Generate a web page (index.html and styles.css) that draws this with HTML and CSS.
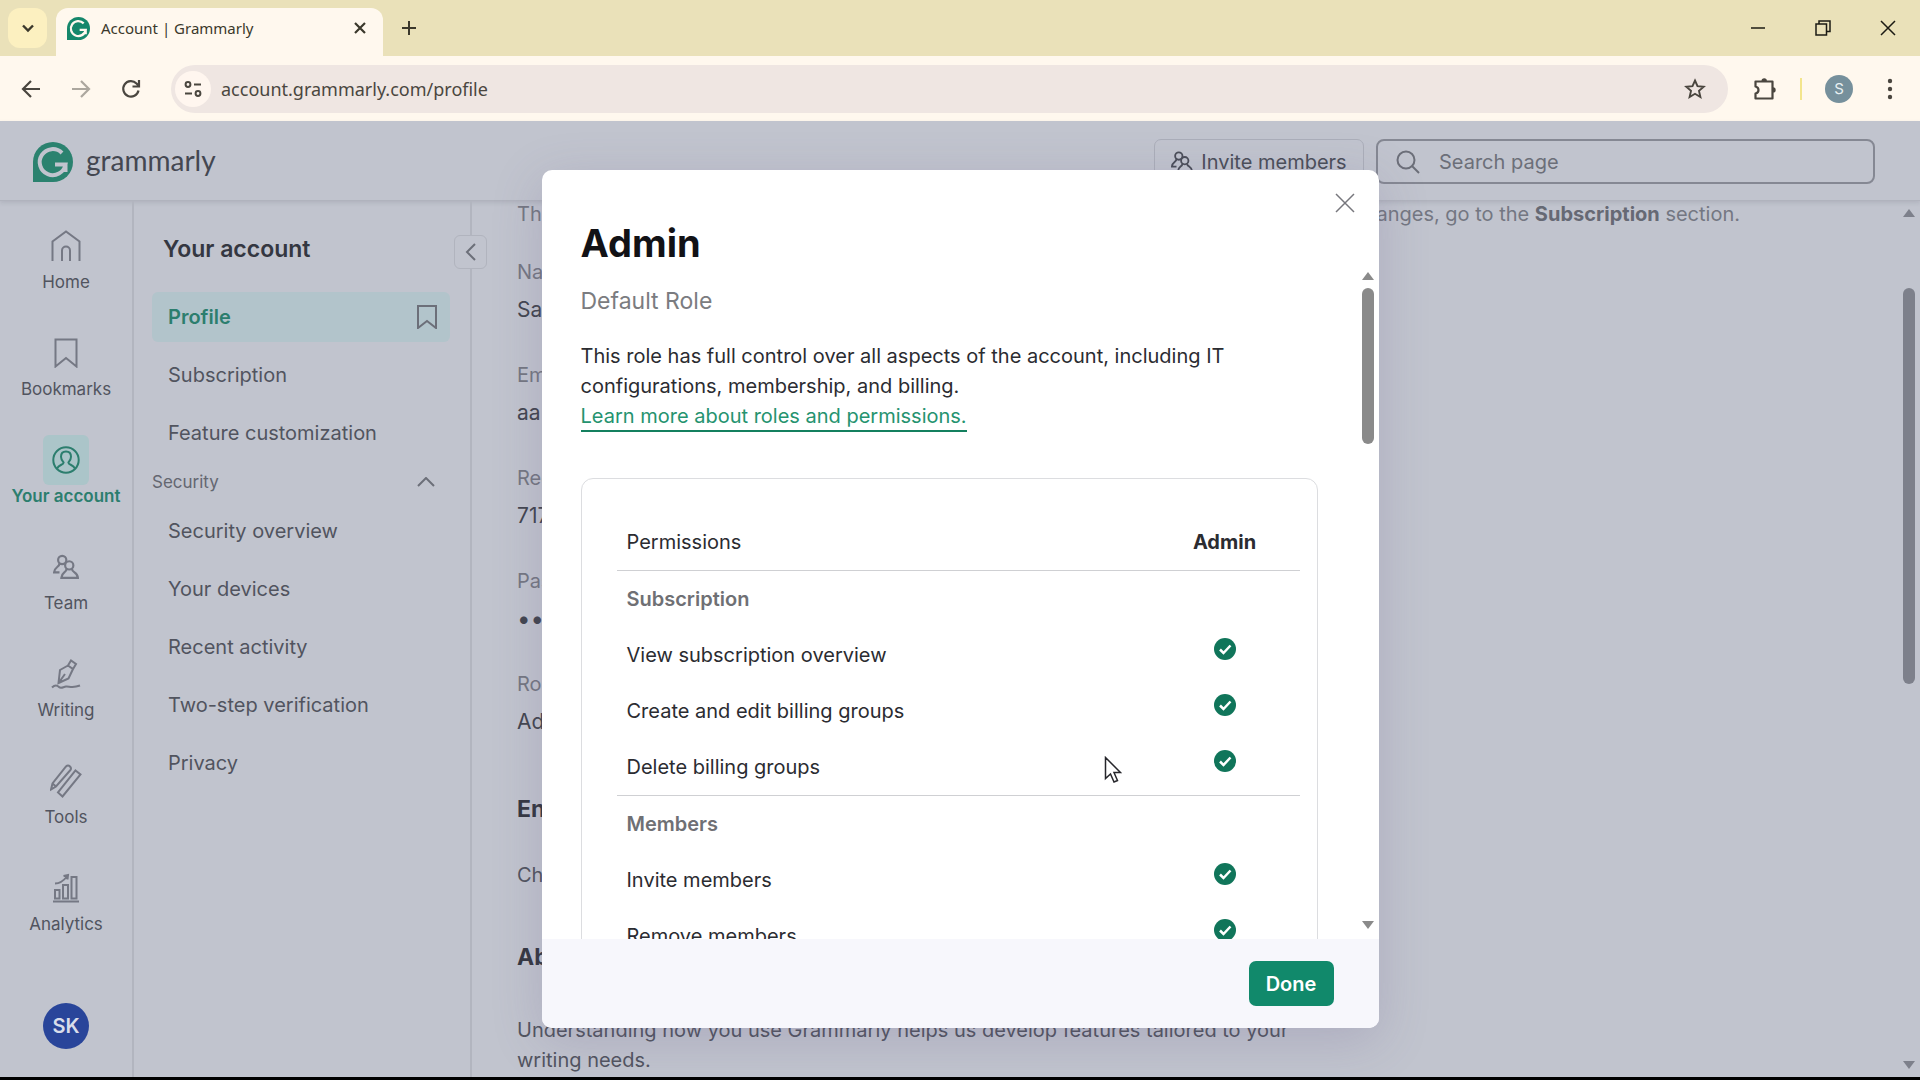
FILE: index.html
```html
<!DOCTYPE html>
<html lang="en">
<head>
  <meta charset="UTF-8" />
  <meta name="viewport" content="width=device-width, initial-scale=1" />
  <title>Account | Grammarly</title>
  <link rel="stylesheet" href="styles.css">
</head>
<body>
  <div class="tabbar">
    <button class="tab-search" aria-label="Search tabs">
      <svg width="14" height="14" viewBox="0 0 14 14"><path d="M2 4.5l5 5 5-5" stroke-width="2.4"/></svg>
    </button>
    <div class="tab">
      <svg class="logo" width="23" height="23" viewBox="0 0 40 40"><path class="leaf" d="M20 0a20 20 0 1 1 0 40H0V20A20 20 0 0 1 20 0z"/><path class="g" d="M29 11a13 13 0 1 0 3.500 11.500H22M32.500 22v8"/></svg>
      <span class="tab-title">Account | Grammarly</span>
      <button class="tab-close" aria-label="Close tab">
        <svg width="12" height="12" viewBox="0 0 12 12"><path d="M1 1l10 10M11 1L1 11" stroke-width="2.2"/></svg>
      </button>
    </div>
    <button class="new-tab" aria-label="New tab">
      <svg width="16" height="16" viewBox="0 0 16 16"><path d="M8 1v14M1 8h14" stroke-width="2"/></svg>
    </button>
    <div class="window-buttons">
      <button aria-label="Minimize"><svg width="16" height="16" viewBox="0 0 16 16"><path d="M1 8h14" stroke-width="1.500"/></svg></button>
      <button aria-label="Restore"><svg width="16" height="16" viewBox="0 0 16 16"><path d="M1 4h10.500v11H1zM4 4V1h11v10.500h-3.500" stroke-width="1.500"/></svg></button>
      <button aria-label="Close"><svg width="16" height="16" viewBox="0 0 16 16"><path d="M1 1l14 14M15 1L1 15" stroke-width="1.500"/></svg></button>
    </div>
  </div>

  <div class="toolbar">
    <button aria-label="Back"><svg width="20" height="20" viewBox="0 0 20 20"><path d="M19 10H2.500M10 2l-8 8 8 8" stroke-width="2.200"/></svg></button>
    <button class="disabled" aria-label="Forward" disabled><svg width="20" height="20" viewBox="0 0 20 20"><path d="M1 10h16.500M10 2l8 8-8 8" stroke-width="2.200"/></svg></button>
    <button aria-label="Reload"><svg width="20" height="20" viewBox="0 0 20 20"><path d="M17.500 11.500A7.700 7.700 0 1 1 15.500 4.500L18 7M18 1v6.500h-6.500" stroke-width="2.200"/></svg></button>
    <div class="address">
      <button class="site-info" aria-label="Site information">
        <svg width="18" height="18" viewBox="0 0 18 18"><circle cx="4" cy="4.500" r="2.400"/><path d="M10 4.500h7M1 13.500h7"/><circle cx="14" cy="13.500" r="2.400"/></svg>
      </button>
      <input type="text" value="account.grammarly.com/profile" aria-label="Address">
      <button aria-label="Bookmark this tab"><svg width="22" height="22" viewBox="0 0 22 22"><path d="M11 2.500l2.500 5.700 6.200.6-4.700 4.100 1.400 6.100-5.400-3.200L5.600 19 7 12.900 2.300 8.800l6.200-.6z" stroke-width="1.900"/></svg></button>
    </div>
    <button class="extensions" aria-label="Extensions"><svg width="24" height="24" viewBox="0 0 24 24"><path d="M2.500 4.500h17v17h-17v-5c4-1 4-6 0-7z" stroke-width="2.200" stroke-linejoin="round"/><path class="solid" d="M8.500 4a2.700 2.700 0 0 1 5.400 0zM20 10.200a2.700 2.700 0 0 1 0 5.400z"/></svg></button>
    <span class="divider"></span>
    <button class="profile" aria-label="Profile S">S</button>
    <button class="more" aria-label="Menu"><svg width="6" height="22" viewBox="0 0 6 22"><g class="solid"><circle cx="3" cy="3" r="2.200"/><circle cx="3" cy="11" r="2.200"/><circle cx="3" cy="19" r="2.200"/></g></svg></button>
  </div>

  <div class="page">
    <header class="header">
      <a class="brand" href="#">
        <svg class="logo" width="40" height="40" viewBox="0 0 40 40"><path class="leaf" d="M20 0a20 20 0 1 1 0 40H0V20A20 20 0 0 1 20 0z"/><path class="g" d="M29 11a13 13 0 1 0 3.500 11.500H22M32.500 22v8"/></svg>
        <span>grammarly</span>
      </a>
      <button class="invite">
        <svg width="22" height="22" viewBox="0 0 24 24"><circle cx="8.500" cy="5.500" r="4"/><path d="M6 8.500c0 4-4.500 3-5 8.500h5"/><circle cx="15" cy="10.500" r="4"/><path d="M12.500 13.500c0 4-4.500 3-4.800 8.500H23c-.4-5.500-5.500-4.500-5.500-8.500"/></svg>
        Invite members
      </button>
      <label class="search">
        <svg width="24" height="24" viewBox="0 0 24 24"><circle cx="10" cy="10" r="8.500"/><path d="M16 16l7 7"/></svg>
        <input type="text" placeholder="Search page" aria-label="Search page">
      </label>
    </header>

    <div class="columns">
      <nav class="rail">
        <a href="#"><span class="icon"><svg width="30" height="32" viewBox="0 0 30 32"><path d="M1.500 31V11.500L15 1.500l13.500 10V31M11 31V20.500a4 4 0 0 1 8 0V31"/></svg></span>Home</a>
        <a href="#"><span class="icon"><svg width="24" height="30" viewBox="0 0 24 30"><path d="M1.500 1.500h21v27L12 20 1.500 28.500z"/></svg></span>Bookmarks</a>
        <a href="#" class="active"><span class="icon"><svg width="28" height="28" viewBox="0 0 28 28"><circle cx="14" cy="14" r="12.700"/><path d="M14 5.500c3.200 0 5 2 5 5.300 0 2.800-1.400 4.500-2.600 5.600 0 2.500 4.600 2 6.600 6.100M14 5.500c-3.200 0-5 2-5 5.300 0 2.800 1.400 4.500 2.600 5.600 0 2.500-4.600 2-6.600 6.100"/></svg></span>Your account</a>
        <a href="#"><span class="icon"><svg width="26" height="26" viewBox="0 0 24 24"><circle cx="8.500" cy="5.500" r="3.800"/><path d="M6 8.500c0 4-4.500 3-5 8.500h5"/><circle cx="15" cy="10.500" r="3.800"/><path d="M12.500 13.500c0 4-4.500 3-4.800 8.500H23c-.4-5.500-5.500-4.500-5.500-8.500"/></svg></span>Team</a>
        <a href="#"><span class="icon"><svg width="30" height="30" viewBox="0 0 30 30"><path d="M17 6.500l3-5 5 3.500-3 5zM17 6.500L9 11 7.500 24l10-4.500L22 10M7.500 24l6.500-9M1 28.500c3-3 5-2.500 7-.5s4 0 7-.5 6 2 14-1"/></svg></span>Writing</a>
        <a href="#"><span class="icon"><svg width="32" height="34" viewBox="0 0 32 34"><path d="M16 2.500q2-2 4 0t0 4L6 22.500 1 25.500l1.500-6zM2.500 19.500L6 22.500M25.500 6.500l5 4L12.500 32.500l-4.500-4z"/></svg></span>Tools</a>
        <a href="#"><span class="icon"><svg width="28" height="30" viewBox="0 0 28 30"><path d="M1 28.500h26M3 17h4.500v8.500H3zM11 12h5v13.500h-5zM19.500 4h5v21.500h-5zM3 10.500c5 0 8-2 12-7M11.500 3L16 2l-.5 4.500"/></svg></span>Analytics</a>
        <button class="avatar">SK</button>
      </nav>

      <nav class="panel">
        <h2>Your account</h2>
        <a href="#" class="active">Profile <svg width="22" height="24" viewBox="0 0 22 24"><path d="M2 1h18v22l-9-7-9 7z"/></svg></a>
        <a href="#">Subscription</a>
        <a href="#">Feature customization</a>
        <button class="group" aria-expanded="true">Security <svg width="18" height="10" viewBox="0 0 18 10"><path d="M1 9l8-8 8 8"/></svg></button>
        <a href="#">Security overview</a>
        <a href="#">Your devices</a>
        <a href="#">Recent activity</a>
        <a href="#">Two-step verification</a>
        <a href="#">Privacy</a>
        <button class="collapse" aria-label="Collapse"><svg width="12" height="18" viewBox="0 0 12 18"><path d="M10 1L2 9l8 8"/></svg></button>
      </nav>

      <main class="content">
        <p class="intro"><span>This is your account information.</span><span>To make changes, go to the <b>Subscription</b> section.</span></p>
        <dl>
          <dt>Name</dt><dd>Sam</dd>
          <dt>Email</dt><dd>aa</dd>
          <dt>Recovery</dt><dd>717</dd>
          <dt>Password</dt><dd class="dots">••••••••</dd>
          <dt>Role</dt><dd>Admin</dd>
        </dl>
        <h3>English</h3>
        <p class="text">Choose your language.</p>
        <h3>About you</h3>
        <p class="text">Understanding how you use Grammarly helps us develop features tailored to your writing needs.</p>
      </main>

      <div class="scrollbar page-scroll">
        <span class="arrow-up"></span>
        <span class="thumb"></span>
        <span class="arrow-down"></span>
      </div>
    </div>

    <div class="overlay">
      <section class="modal" role="dialog" aria-labelledby="role-title">
        <div class="modal-head">
          <h1 id="role-title">Admin</h1>
          <button aria-label="Close"><svg width="20" height="20" viewBox="0 0 20 20"><path d="M1 1l18 18M19 1L1 19"/></svg></button>
        </div>
        <div class="modal-body">
          <div class="modal-scroll">
            <p class="subtitle">Default Role</p>
            <p class="desc">This role has full control over all aspects of the account, including IT configurations, membership, and billing.</p>
            <a class="learn" href="#">Learn more about roles and permissions.</a>
            <div class="card">
              <table>
                <thead>
                  <tr><th scope="col">Permissions</th><th scope="col">Admin</th></tr>
                </thead>
                <tbody>
                  <tr class="section"><th colspan="2">Subscription</th></tr>
                  <tr><td>View subscription overview</td><td><svg class="check" width="22" height="22" viewBox="0 0 22 22"><circle cx="11" cy="11" r="11"/><path d="M6 11.500l3.500 3.500 7-7.500"/></svg></td></tr>
                  <tr><td>Create and edit billing groups</td><td><svg class="check" width="22" height="22" viewBox="0 0 22 22"><circle cx="11" cy="11" r="11"/><path d="M6 11.500l3.500 3.500 7-7.500"/></svg></td></tr>
                  <tr><td>Delete billing groups</td><td><svg class="check" width="22" height="22" viewBox="0 0 22 22"><circle cx="11" cy="11" r="11"/><path d="M6 11.500l3.500 3.500 7-7.500"/></svg></td></tr>
                </tbody>
                <tbody>
                  <tr class="section"><th colspan="2">Members</th></tr>
                  <tr><td>Invite members</td><td><svg class="check" width="22" height="22" viewBox="0 0 22 22"><circle cx="11" cy="11" r="11"/><path d="M6 11.500l3.500 3.500 7-7.500"/></svg></td></tr>
                  <tr><td>Remove members</td><td><svg class="check" width="22" height="22" viewBox="0 0 22 22"><circle cx="11" cy="11" r="11"/><path d="M6 11.500l3.500 3.500 7-7.500"/></svg></td></tr>
                </tbody>
              </table>
            </div>
          </div>
          <div class="scrollbar modal-bar">
            <span class="arrow-up"></span>
            <span class="thumb"></span>
            <span class="arrow-down"></span>
          </div>
        </div>
        <div class="modal-foot">
          <button class="done">Done</button>
        </div>
      </section>
    </div>
  </div>

  <svg class="cursor" width="18" height="28" viewBox="0 0 18 28"><path d="M1.500 1.500v21l5-4.500 3.500 8 3.500-1.500-3.500-8h6.500z"/></svg>
</body>
</html>
```
FILE: styles.css
```css
* {
  box-sizing: border-box;
}

body {
  margin: 0;
  height: 100vh;
  display: flex;
  flex-direction: column;
  overflow: hidden;
  background: #c1c4ce;
  border-bottom: 3px solid #000;
  font-family: Inter, sans-serif;
  font-size: 20px;
  color: #51545f;
}

h1, h2, h3, p, dl, dd {
  margin: 0;
}

button {
  display: flex;
  align-items: center;
  justify-content: center;
  padding: 0;
  border: none;
  background: none;
  font: inherit;
  color: inherit;
  cursor: pointer;
}

input {
  border: none;
  outline: none;
  background: none;
  font: inherit;
  color: inherit;
}

a {
  color: inherit;
  text-decoration: none;
}

svg {
  fill: none;
  stroke: currentColor;
  stroke-width: 2;
  flex-shrink: 0;
}

.solid {
  fill: currentColor;
  stroke: none;
}

.leaf {
  fill: #15876b;
  stroke: none;
}

.logo .g {
  stroke: #fff8ee;
  stroke-width: 4;
}

/* browser window */
.tabbar {
  display: flex;
  height: 56px;
  padding: 8px 16px 0 8px;
  background: #eae1b9;
  color: #3b382b;
}

.tab-search {
  width: 39px;
  height: 40px;
  border-radius: 12px;
  background: #fcf0c0;
}

.tab {
  display: flex;
  align-items: center;
  gap: 11px;
  width: 327px;
  margin-left: 9px;
  padding: 0 17px 8px 11px;
  border-radius: 12px 12px 0 0;
  background: #fff8ee;
  font-family: "Noto Sans", sans-serif;
  font-size: 15px;
}

.tab-title {
  flex: 1;
}

.new-tab {
  width: 52px;
  height: 40px;
}

.window-buttons {
  display: flex;
  gap: 33px;
  height: 40px;
  margin-left: auto;
  color: #1c1b14;
}

.window-buttons button {
  width: 32px;
}

.toolbar {
  display: flex;
  align-items: center;
  height: 65px;
  padding: 0 20px 0 21px;
  background: #fff8ee;
  color: #4a463f;
}

.toolbar > button {
  width: 20px;
  margin-right: 30px;
}

.toolbar .disabled {
  opacity: 0.45;
}

.address {
  flex: 1;
  display: flex;
  align-items: center;
  height: 48px;
  padding: 0 22px 0 4px;
  border-radius: 24px;
  background: #efe6e2;
}

.site-info {
  width: 36px;
  height: 36px;
  border-radius: 18px;
  background: #fff6ef;
}

.address input {
  flex: 1;
  padding: 0 10px;
  font-family: "Noto Sans", sans-serif;
  font-size: 18px;
}

.toolbar .extensions {
  margin: 0 25px 0 27px;
}

.divider {
  width: 2px;
  height: 22px;
  background: #f3e58d;
}

.toolbar .profile {
  width: 28px;
  height: 28px;
  margin: 0 27px 0 23px;
  border-radius: 50%;
  background: #76909c;
  color: #e9f0f2;
  font-size: 15px;
}

.toolbar .more {
  width: 20px;
  margin: 0;
}

/* account page */
.page {
  position: relative;
  flex: 1;
  min-height: 0;
  display: flex;
  flex-direction: column;
}

.header {
  display: flex;
  align-items: center;
  gap: 12px;
  height: 80px;
  padding: 2px 45px 0 33px;
  border-bottom: 1px solid #b0b3bd;
  box-shadow: 0 2px 4px rgba(80, 84, 100, 0.15);
}

.brand {
  display: flex;
  align-items: center;
  gap: 13px;
  margin-right: auto;
  color: #444751;
  font-family: Lato, sans-serif;
  font-size: 28px;
}

.brand span {
  padding-bottom: 3px;
}

.brand .leaf {
  fill: #2b826f;
}

.brand .g {
  stroke: #c1c4ce;
}

.invite {
  gap: 8px;
  width: 210px;
  height: 45px;
  border: 1px solid #abaeb9;
  border-radius: 7px;
  color: #4b4e59;
}

.search {
  display: flex;
  align-items: center;
  gap: 19px;
  width: 499px;
  height: 45px;
  padding: 0 18px;
  border: 2px solid #858893;
  border-radius: 8px;
  color: #6c6f79;
}

.search input {
  flex: 1;
  padding: 0;
}

.search input::placeholder {
  color: #6c6f79;
}

.columns {
  flex: 1;
  min-height: 0;
  display: flex;
}

.rail {
  display: flex;
  flex-direction: column;
  align-items: center;
  width: 134px;
  padding: 20px 0 28px;
  border-right: 2px solid #b2b5bf;
  font-size: 17px;
}

.rail a {
  display: flex;
  flex-direction: column;
  align-items: center;
  height: 107px;
  line-height: 22px;
}

.icon {
  display: flex;
  align-items: center;
  justify-content: center;
  width: 46px;
  height: 50px;
  border-radius: 6px;
  color: #757884;
}

.rail .active {
  color: #2c7e6e;
  font-weight: 600;
}

.active .icon {
  background: #abc5c9;
  color: #2c7e6e;
}

.avatar {
  width: 46px;
  height: 46px;
  margin-top: auto;
  border-radius: 50%;
  background: #29459a;
  color: #d9ddea;
  font-size: 20px;
  font-weight: 600;
}

.panel {
  position: relative;
  display: flex;
  flex-direction: column;
  width: 338px;
  padding: 34px 20px 0 18px;
  border-right: 2px solid #b2b5bf;
}

.panel h2 {
  margin-bottom: 29px;
  padding-left: 11px;
  color: #343741;
  font-size: 23px;
  font-weight: 600;
  line-height: 28px;
}

.panel a {
  display: flex;
  align-items: center;
  justify-content: space-between;
  height: 50px;
  margin-bottom: 8px;
  padding: 0 12px 0 16px;
  border-radius: 6px;
}

.panel .active {
  background: #b2c4cb;
  color: #2c7e6e;
  font-weight: 600;
}

.panel svg {
  color: #6c6f79;
}

.group {
  justify-content: space-between;
  height: 32px;
  margin-bottom: 8px;
  padding-right: 15px;
  color: #646771;
  font-size: 17px;
}

/* sits across the panel's right edge */
.collapse {
  position: absolute;
  top: 34px;
  right: -17px;
  width: 33px;
  height: 34px;
  border: 1px solid #b1b4be;
  border-radius: 6px;
  background: #c1c4ce;
}

.content {
  flex: 1;
  min-width: 0;
  padding-left: 45px;
  line-height: 30px;
}

.intro {
  display: flex;
  justify-content: space-between;
  max-width: 1223px;
  margin-bottom: 30px;
  color: #747782;
  line-height: 26px;
}

.intro b {
  color: #666974;
  font-weight: 700;
}

.content dl {
  margin-bottom: 57px;
}

.content dt {
  margin-bottom: 8px;
  color: #747782;
}

.content dd {
  margin-bottom: 35px;
  color: #42454f;
  font-size: 21px;
}

.content .dots {
  font-size: 24px;
}

.content h3 {
  margin: 52px 0 36px;
  color: #343741;
  font-size: 23px;
  font-weight: 700;
}

.content h3:last-of-type {
  margin-bottom: 43px;
}

.text {
  max-width: 790px;
}

/* scrollbars */
.scrollbar {
  display: flex;
  flex-direction: column;
  align-items: center;
  width: 22px;
  color: #8a8a8a;
}

.thumb {
  width: 12px;
  border-radius: 6px;
  background: currentColor;
}

.arrow-up,
.arrow-down {
  border: 6px solid transparent;
}

.arrow-up {
  border-top: none;
  border-bottom: 8px solid currentColor;
}

.arrow-down {
  margin-top: auto;
  border-bottom: none;
  border-top: 8px solid currentColor;
}

.page-scroll {
  padding: 8px 0;
  color: #7d808b;
}

.page-scroll .thumb {
  height: 46%;
  margin-top: 71px;
}

.modal-bar {
  padding: 7px 0 10px;
}

.modal-bar .thumb {
  height: 156px;
  margin-top: 8px;
}

/* role dialog */
.overlay {
  position: absolute;
  inset: 0;
  display: flex;
  justify-content: center;
  padding: 49px;
}

.modal {
  display: flex;
  flex-direction: column;
  width: 837px;
  border-radius: 10px;
  background: #fff;
  box-shadow: 0 12px 50px rgba(100, 85, 135, 0.22);
  overflow: hidden;
}

.modal-head {
  display: flex;
  align-items: flex-start;
  justify-content: space-between;
  padding: 23px 24px 0 39px;
}

.modal-head h1 {
  padding-top: 28px;
  color: #121216;
  font-size: 38px;
  font-weight: 700;
  line-height: 44px;
}

.modal-head svg {
  stroke-width: 1.500;
  color: #77777d;
}

.modal-body {
  flex: 1;
  min-height: 0;
  display: flex;
}

.modal-scroll {
  flex: 1;
  padding: 21px 39px 0 39px;
  overflow: hidden;
  color: #2b2c31;
  line-height: 30px;
}

.subtitle {
  margin-bottom: 25px;
  color: #7b7c80;
  font-size: 23px;
}

.desc {
  max-width: 680px;
}

.learn {
  display: inline-block;
  border-bottom: 2px solid #14805f;
  color: #25936f;
  line-height: 28px;
}

.card {
  margin-top: 46px;
  padding: 35px 17px 34px 35px;
  border: 1px solid #dcdde0;
  border-radius: 12px;
}

.card table {
  width: 100%;
  border-collapse: collapse;
}

.card th,
.card td {
  height: 56px;
  padding: 0 0 0 10px;
  font-weight: 400;
  text-align: left;
}

.card th + th,
.card td + td {
  width: 150px;
  padding: 0;
  text-align: center;
}

.card thead th + th {
  font-weight: 700;
}

.card tbody {
  border-top: 1px solid #cfd0d3;
}

.card .section th {
  height: 57px;
  color: #6f7074;
  font-weight: 600;
}

.check {
  display: block;
  margin: 0 auto 12px;
  stroke: none;
}

.check circle {
  fill: #10755a;
}

.check path {
  stroke: #fff;
  stroke-width: 2.500;
}

.modal-foot {
  display: flex;
  align-items: center;
  justify-content: flex-end;
  height: 89px;
  padding: 0 45px;
  background: #f7f7fc;
}

.done {
  width: 85px;
  height: 45px;
  border-radius: 7px;
  background: #11896b;
  color: #fff;
  font-weight: 600;
}

.cursor {
  position: absolute;
  left: 1104px;
  top: 756px;
  fill: #fff;
  stroke: #26262b;
  stroke-width: 1.500;
}
```
